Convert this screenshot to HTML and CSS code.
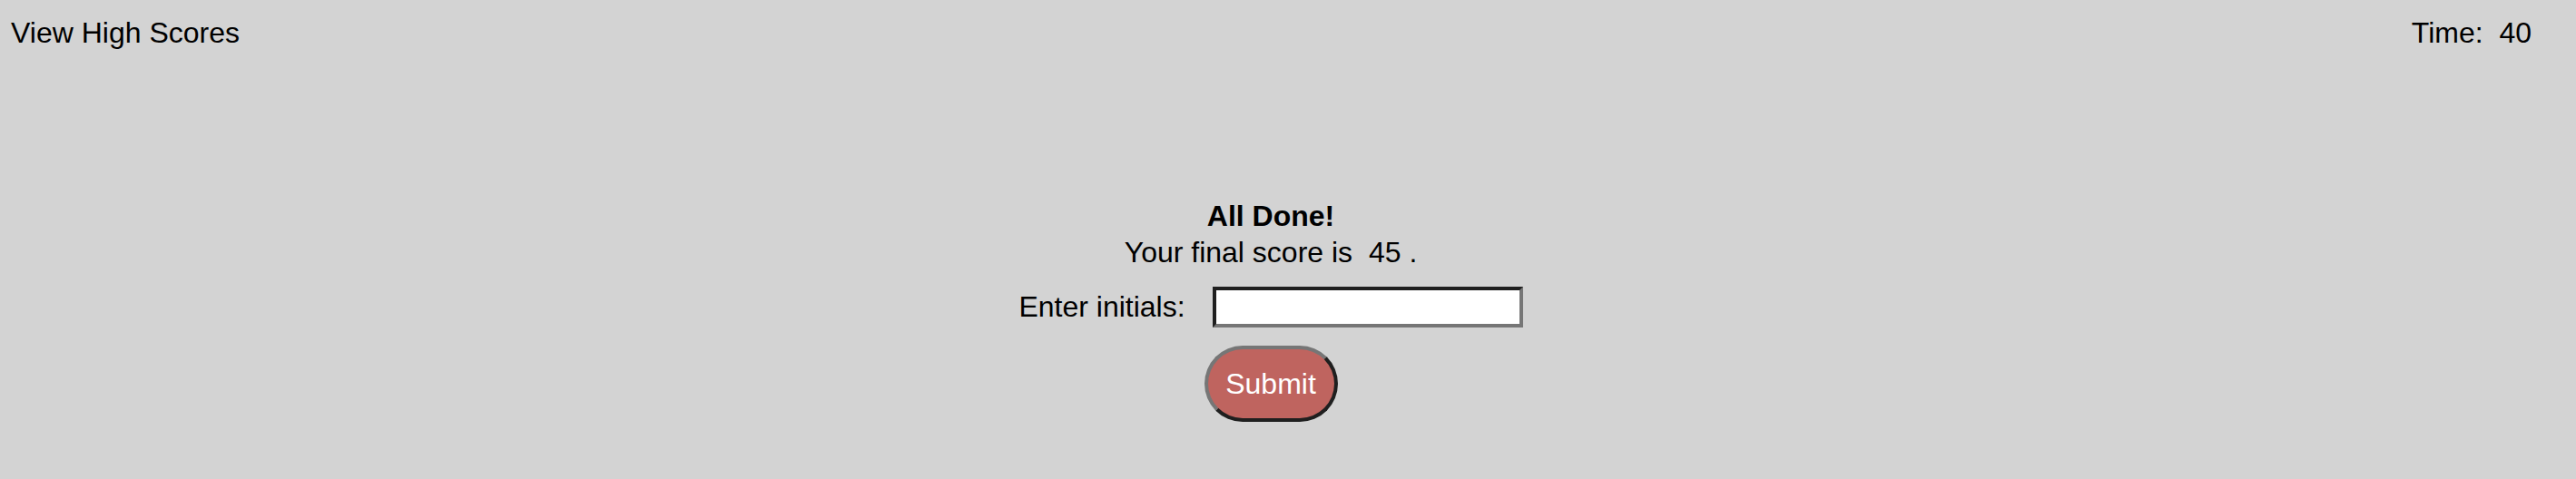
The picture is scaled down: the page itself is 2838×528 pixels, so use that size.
FILE: index.html
```html
<!DOCTYPE html>
<html>
<head>
<meta charset="utf-8">
<title>Quiz</title>
<link rel="stylesheet" href="styles.css">
</head>
<body>
<header class="top-bar">
  <a class="high-scores">View High Scores</a>
  <div class="timer">Time:&nbsp; 40</div>
</header>
<main class="done">
  <h2 class="done-title">All Done!</h2>
  <p class="done-score">Your final score is&nbsp; 45 .</p>
  <form class="initials-row">
    <label class="initials-label" for="initials">Enter initials:</label>
    <input class="initials-input" id="initials" type="text">
  </form>
  <button class="submit-btn" type="button">Submit</button>
</main>
</body>
</html>
```

FILE: styles.css
```css
html, body {
  margin: 0;
  padding: 0;
}

body {
  background: #d3d3d3;
  color: #000;
  font-family: "Liberation Sans", Arial, Helvetica, sans-serif;
  font-size: 32px;
  line-height: 40px;
  width: 2838px;
  height: 528px;
  overflow: hidden;
}

.top-bar {
  display: flex;
  justify-content: space-between;
  padding: 16px 49px 0 12px;
}

.high-scores {
  color: #000;
  text-decoration: none;
}

.done {
  display: flex;
  flex-direction: column;
  align-items: center;
  padding-right: 38px;
  margin-top: 162px;
}

.done-title {
  margin: 0;
  font-size: 32px;
  font-weight: bold;
  line-height: 40px;
}

.done-score {
  margin: 0;
  white-space: pre;
}

.initials-row {
  display: flex;
  align-items: flex-start;
  gap: 30px;
  margin: 18px 0 0;
}

.initials-label {
  margin-top: 2px;
}

.initials-input {
  box-sizing: border-box;
  width: 342px;
  height: 45px;
  margin: 0;
  padding: 0 6px;
  background: #fff;
  border: 4px solid;
  border-color: #1f1f1f #767676 #767676 #1f1f1f;
  font-family: inherit;
  font-size: 26px;
  outline: none;
}

.submit-btn {
  box-sizing: border-box;
  width: 147px;
  height: 84px;
  margin-top: 20px;
  padding: 0;
  background: #bf645f;
  color: #fff;
  border: 4px solid;
  border-color: #767676 #1f1f1f #1f1f1f #767676;
  border-radius: 42px;
  font-family: inherit;
  font-size: 32px;
  line-height: 40px;
  cursor: pointer;
}
```
